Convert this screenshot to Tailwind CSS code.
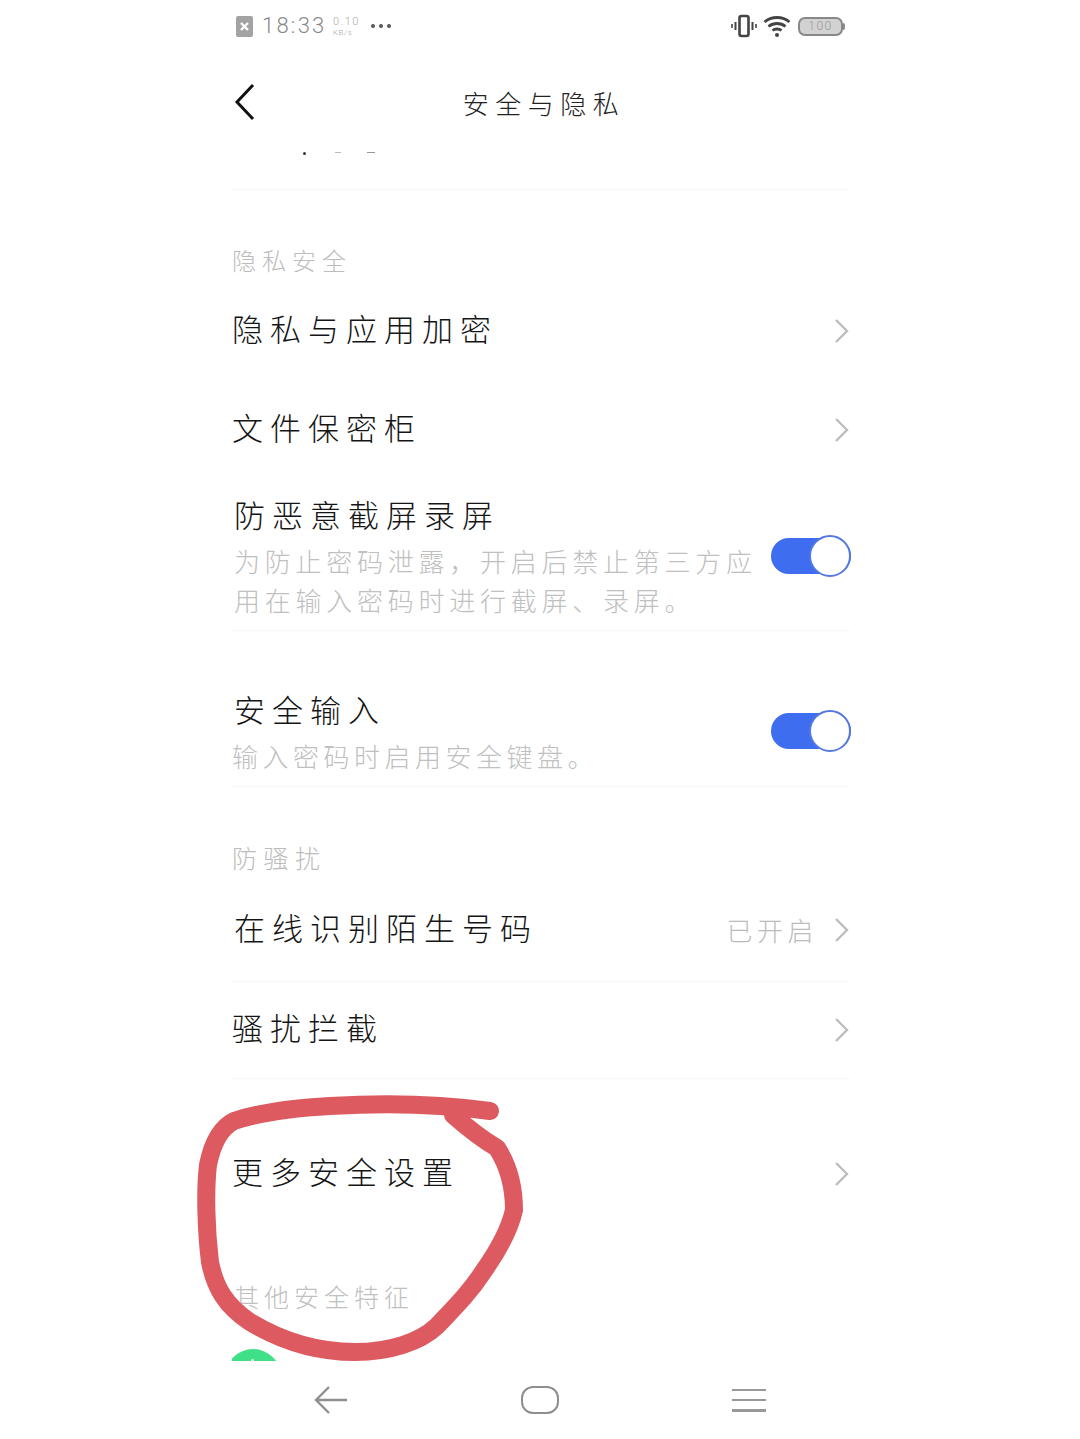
<!DOCTYPE html>
<html lang="zh-CN">

<head>
    <meta charset="UTF-8" />
    <meta name="viewport" content="width=device-width, initial-scale=1.0" />
    <title>安全与隐私</title>
    <script src="https://cdn.jsdelivr.net/npm/@tailwindcss/browser@4"></script>
</head>

<body class="bg-white">
    <div class="relative w-[1080px] h-[1439px] overflow-hidden bg-white font-['Noto_Sans_CJK_SC',sans-serif] font-light">

        <!-- Status bar -->
        <header class="h-[52px] ml-[236px] w-[610px] flex items-center justify-between">
            <div class="flex items-center">
                <div class="w-[17px] h-[21px] rounded-[2px] bg-[#a3a3a3] flex items-center justify-center">
                    <svg width="11" height="11" viewBox="0 0 11 11"><path d="M2 2l7 7M9 2l-7 7" stroke="#fff" stroke-width="2.4" /></svg>
                </div>
                <span class="ml-[9px] w-[64px] text-[22px] leading-none tracking-[2.200px] text-[#888] font-['Roboto',sans-serif] font-light">18:33</span>
                <div class="ml-[7px] w-[30px] flex flex-col font-['Roboto',sans-serif] font-light text-[#aaa] leading-none">
                    <span class="text-[11px] tracking-[1.500px]">0.10</span>
                    <span class="text-[8px] mt-[2px] tracking-[0.500px]">KB/s</span>
                </div>
                <div class="ml-[8px] flex gap-[4px]">
                    <i class="w-[4px] h-[4px] rounded-full bg-[#555]"></i>
                    <i class="w-[4px] h-[4px] rounded-full bg-[#555]"></i>
                    <i class="w-[4px] h-[4px] rounded-full bg-[#555]"></i>
                </div>
            </div>
            <div class="flex items-center mr-[1px]">
                <svg width="26" height="24" viewBox="0 0 26 24" fill="none" stroke="#444">
                    <rect x="8.5" y="2" width="9" height="20" rx="2" stroke-width="2.6" />
                    <path d="M4.5 8v8M21.500 8v8" stroke-width="2" />
                    <path d="M1 10v4M25 10v4" stroke-width="1.6" />
                </svg>
                <svg class="ml-[6px]" width="28" height="24" viewBox="0 0 28 24" fill="none" stroke="#444" stroke-width="2.800">
                    <path d="M1.500 8c7-6 18-6 25 0M5.500 12.500c5-4 12-4 17 0M9.500 16.500c2.500-2 6.500-2 9 0" />
                    <circle cx="14" cy="21" r="2" fill="#444" stroke="none" />
                </svg>
                <div class="ml-[7px] flex items-center">
                    <div class="w-[45px] h-[19px] rounded-[7px] border-2 border-[#888] bg-[#d2d2d2] flex items-center justify-center text-[12px] leading-none tracking-[1.500px] text-[#999] font-['Roboto',sans-serif] font-light">100</div>
                    <i class="w-[2px] h-[7px] bg-[#888] rounded-r-sm"></i>
                </div>
            </div>
        </header>

        <!-- Title bar -->
        <nav class="relative h-[100px] flex items-center justify-center">
            <svg class="absolute left-[233px] top-[31px]" width="23" height="38" viewBox="0 0 23 38" fill="none" stroke="#111" stroke-width="3">
                <path d="M20 2L4 19l16 17" />
            </svg>
            <h1 class="text-[26px] leading-none tracking-[6.500px] text-[#222] mt-[2px] ml-[8px]">安全与隐私</h1>
        </nav>

        <!-- Settings list -->
        <main class="ml-[232px] w-[620px] pr-[2px] h-[1209px] overflow-hidden">
            <div class="relative h-[38px] border-b border-[#f6f6f6]">
                <div class="absolute left-[71px] top-0 flex items-start">
                    <i class="w-[3px] h-[3px] rounded-full bg-[#333]"></i>
                    <i class="ml-[29px] w-[6px] h-[1px] bg-[#bbb]"></i>
                    <i class="ml-[26px] w-[8px] h-[1px] bg-[#999]"></i>
                </div>
            </div>

            <div class="h-[91px] pt-[55px] text-[24px] leading-[30px] tracking-[6px] text-[#bcbcbc]">隐私安全</div>

            <div class="h-[99px] flex items-center justify-between">
                <span class="text-[31px] tracking-[7px] text-[#151515] -mt-[4px]">隐私与应用加密</span>
                <svg width="16" height="26" viewBox="0 0 16 26" fill="none" stroke="#bdbdbd" stroke-width="2.400"><path d="M2 2l11 11L2 24" /></svg>
            </div>
            <div class="h-[99px] flex items-center justify-between">
                <span class="text-[31px] tracking-[7px] text-[#151515] -mt-[4px]">文件保密柜</span>
                <svg width="16" height="26" viewBox="0 0 16 26" fill="none" stroke="#bdbdbd" stroke-width="2.400"><path d="M2 2l11 11L2 24" /></svg>
            </div>

            <div class="h-[152px] pt-[17px] border-b border-[#f6f6f6] flex items-center justify-between">
                <div class="w-[530px] -mt-[14px]">
                    <div class="h-[40px] leading-[40px] text-[31px] tracking-[7px] text-[#151515] pl-[2px]">防恶意截屏录屏</div>
                    <p class="mt-[7px] pl-[2px] text-[26px] leading-[39px] tracking-[4.750px] text-[#c0c0c0]">为防止密码泄露，开启后禁止第三方应用在输入密码时进行截屏、录屏。</p>
                </div>
                <div class="relative w-[80px] h-[42px] flex items-center shrink-0 -mr-[1px] -mt-[15px]">
                    <div class="w-full h-[36px] rounded-full bg-[#3f6df0]"></div>
                    <div class="absolute right-0 top-0 w-[42px] h-[42px] rounded-full bg-white border-2 border-[#5478e0]"></div>
                </div>
            </div>

            <div class="h-[156px] pt-[58px] border-b border-[#f6f6f6] flex items-start justify-between">
                <div>
                    <div class="h-[40px] leading-[40px] text-[31px] tracking-[7px] text-[#151515] pl-[2px]">安全输入</div>
                    <p class="mt-[7px] text-[26px] leading-[39px] tracking-[4.500px] text-[#c0c0c0]">输入密码时启用安全键盘。</p>
                </div>
                <div class="relative w-[80px] h-[42px] flex items-center shrink-0 -mr-[1px] mt-[21px]">
                    <div class="w-full h-[36px] rounded-full bg-[#3f6df0]"></div>
                    <div class="absolute right-0 top-0 w-[42px] h-[42px] rounded-full bg-white border-2 border-[#5478e0]"></div>
                </div>
            </div>

            <div class="h-[91px] pt-[55px] text-[25px] leading-[30px] tracking-[6.500px] text-[#bcbcbc]">防骚扰</div>

            <div class="h-[104px] border-b border-[#f6f6f6] flex items-center justify-between">
                <span class="text-[31px] tracking-[7px] text-[#151515] pl-[2px] -mt-[4px]">在线识别陌生号码</span>
                <div class="flex items-center">
                    <span class="text-[26px] tracking-[4.500px] text-[#bcbcbc]">已开启</span>
                    <svg class="ml-[16px]" width="16" height="26" viewBox="0 0 16 26" fill="none" stroke="#bdbdbd" stroke-width="2.400"><path d="M2 2l11 11L2 24" /></svg>
                </div>
            </div>

            <div class="h-[97px] border-b border-[#f6f6f6] flex items-center justify-between">
                <span class="text-[31px] tracking-[7px] text-[#151515] -mt-[6px]">骚扰拦截</span>
                <svg width="16" height="26" viewBox="0 0 16 26" fill="none" stroke="#bdbdbd" stroke-width="2.400"><path d="M2 2l11 11L2 24" /></svg>
            </div>

            <div class="h-[190px] flex items-center justify-between">
                <span class="text-[31px] tracking-[7px] text-[#151515] -mt-[6px]">更多安全设置</span>
                <svg width="16" height="26" viewBox="0 0 16 26" fill="none" stroke="#bdbdbd" stroke-width="2.400"><path d="M2 2l11 11L2 24" /></svg>
            </div>

            <div class="h-[80px] pt-[12px] pl-[2px] text-[25px] leading-[30px] tracking-[5px] text-[#c0c0c0]">其他安全特征</div>

            <div class="relative -ml-[7px] w-[56px] h-[56px] rounded-full bg-[#40e088]">
                <i class="absolute left-[26px] top-[10px] w-[3px] h-[3px] rounded-full bg-white"></i>
            </div>
        </main>

        <!-- Navigation bar -->
        <footer class="ml-[226px] w-[628px] h-[78px] grid grid-cols-3 items-center justify-items-center">
            <svg width="34" height="30" viewBox="0 0 34 30" fill="none" stroke="#8f8f8f" stroke-width="2.400"><path d="M15 2L2 15l13 13M2 15h31" /></svg>
            <div class="w-[38px] h-[28px] rounded-[12px] border-2 border-[#8f8f8f]"></div>
            <div class="w-[34px] flex flex-col gap-[8px]">
                <i class="h-[2px] bg-[#999]"></i>
                <i class="h-[2px] bg-[#999]"></i>
                <i class="h-[3px] bg-[#999]"></i>
            </div>
        </footer>

        <!-- Hand-drawn marker circle -->
        <svg class="absolute left-0 top-0 pointer-events-none" width="1080" height="1439" fill="none">
            <path d="M490 1111C440 1104 380 1103 330 1106C295 1108 258 1113 234 1121C220 1128 212 1145 208 1165C205 1190 206 1230 210 1262C215 1288 226 1306 250 1322C280 1340 315 1352 355 1352C390 1352 420 1342 437 1326C455 1307 470 1292 483 1272C500 1248 510 1228 514 1210C514 1185 508 1165 497 1148C480 1138 470 1130 453 1115" stroke="#dc5a60" stroke-width="18" stroke-linecap="round" stroke-linejoin="round" />
        </svg>
    </div>
</body>

</html>
